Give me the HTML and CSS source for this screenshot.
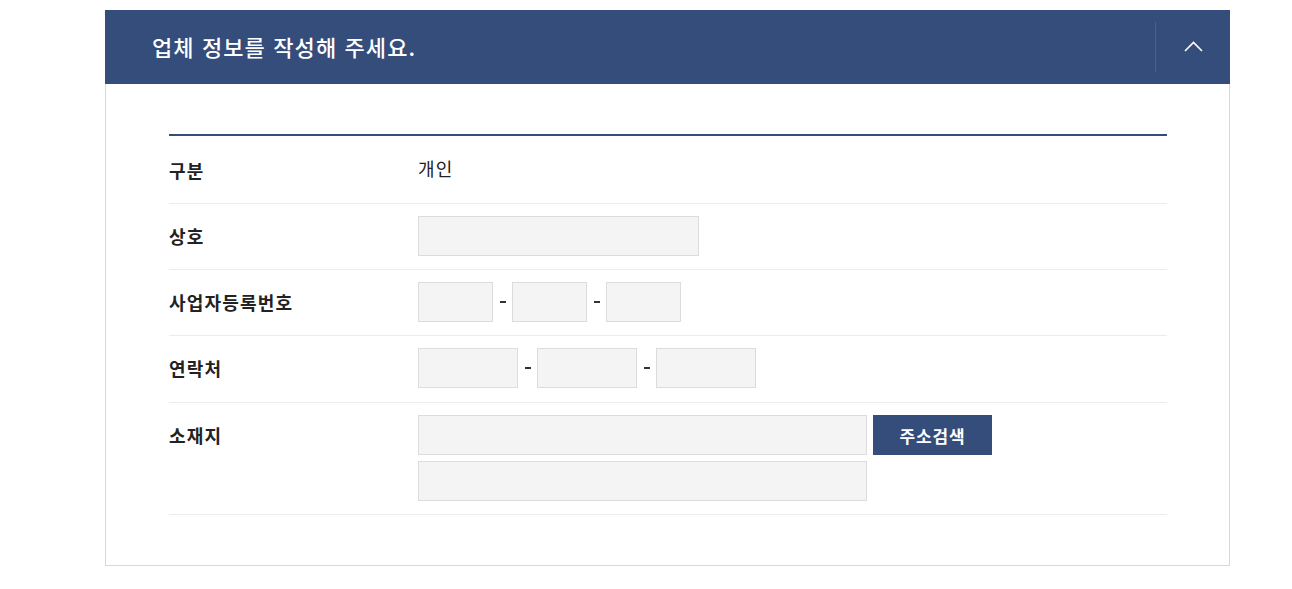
FILE: index.html
```html
<!DOCTYPE html>
<html lang="ko">
<head>
<meta charset="utf-8">
<title>업체 정보</title>
<link rel="stylesheet" href="styles.css">
</head>
<body>
<section class="panel">
  <header class="panel-head">
    <h2 class="panel-title">업체 정보를 작성해 주세요.</h2>
    <button class="toggle" type="button" aria-label="접기">
      <svg width="19" height="11" viewBox="0 0 19 11"><polyline points="1,10 9.5,1.5 18,10" fill="none" stroke="#fff" stroke-width="1.6"/></svg>
    </button>
  </header>
  <div class="panel-body">
    <div class="form">
      <div class="row first">
        <div class="label">구분</div>
        <div class="field"><span class="value">개인</span></div>
      </div>
      <div class="row">
        <div class="label">상호</div>
        <div class="field"><input class="inp w280" type="text"></div>
      </div>
      <div class="row">
        <div class="label">사업자등록번호</div>
        <div class="field">
          <input class="inp w75" type="text"><span class="dash"></span>
          <input class="inp w75" type="text"><span class="dash"></span>
          <input class="inp w75" type="text">
        </div>
      </div>
      <div class="row tall">
        <div class="label">연락처</div>
        <div class="field">
          <input class="inp w100" type="text"><span class="dash"></span>
          <input class="inp w100" type="text"><span class="dash"></span>
          <input class="inp w100" type="text">
        </div>
      </div>
      <div class="row">
        <div class="label">소재지</div>
        <div class="field stack">
          <div class="line">
            <input class="inp w449" type="text">
            <button class="btn" type="button">주소검색</button>
          </div>
          <div class="line">
            <input class="inp w449" type="text">
          </div>
        </div>
      </div>
    </div>
  </div>
</section>
</body>
</html>
```

FILE: styles.css
```css
* { box-sizing: border-box; }
html, body { margin: 0; padding: 0; background: #fff; }
body {
  font-family: "Noto Sans CJK KR", "Noto Sans", sans-serif;
  color: #222;
  padding: 10px 0 0 105px;
}
.panel {
  width: 1125px;
  border: 1px solid #d8d8d8;
  border-top: none;
}
.panel-head {
  height: 74px;
  background: #344d7a;
  margin: 0 -1px;
  display: flex;
  align-items: center;
  justify-content: space-between;
}
.panel-title {
  margin: -2px 0 0 47px;
  color: #fff;
  font-size: 22px;
  font-weight: 500;
  letter-spacing: 1.1px;
  line-height: 1;
}
.toggle {
  width: 75px;
  height: 50px;
  border: none;
  border-left: 1px solid #4a6290;
  background: transparent;
  padding: 0;
  display: flex;
  align-items: center;
  justify-content: center;
  cursor: pointer;
}
.toggle svg { display: block; margin-left: 1px; margin-top: -1px; }
.panel-body {
  padding: 50px 62px 50px 63px;
}
.form {
  border-top: 2px solid #344d7a;
}
.row {
  display: flex;
  align-items: flex-start;
  padding: 12px 0 13px;
  border-bottom: 1px solid #ececec;
}
.row.first { padding: 12px 0 15px; }
.row.tall { padding-bottom: 14px; }
.label {
  width: 249px;
  flex: none;
  font-size: 18px;
  font-weight: 700;
  line-height: 40px;
  height: 40px;
  color: #222;
  letter-spacing: 1.2px;
}
.row.first .label { padding-top: 2px; }
.field {
  display: flex;
  align-items: center;
  min-height: 40px;
}
.value {
  font-size: 18px;
  line-height: 40px;
  color: #222;
  letter-spacing: 1.2px;
}
.stack {
  flex-direction: column;
  align-items: flex-start;
  gap: 6px;
}
.line {
  display: flex;
  align-items: center;
  gap: 6px;
}
.inp {
  height: 40px;
  background: #f4f4f4;
  border: 1px solid #dcdcdc;
  border-radius: 0;
  padding: 0 10px;
  font: inherit;
  outline: none;
  margin: 0;
}
.w75 { width: 75px; }
.w100 { width: 100px; }
.w280 { width: 281px; }
.w449 { width: 449px; }
.dash {
  display: inline-block;
  width: 6px;
  height: 2px;
  background: #333;
  margin: 0 6px 0 7px;
}
.btn {
  width: 119px;
  height: 40px;
  background: #344d7a;
  border: none;
  color: #fff;
  font-family: inherit;
  font-size: 17px;
  font-weight: 700;
  letter-spacing: 0.8px;
  padding: 0;
  cursor: pointer;
}
```
